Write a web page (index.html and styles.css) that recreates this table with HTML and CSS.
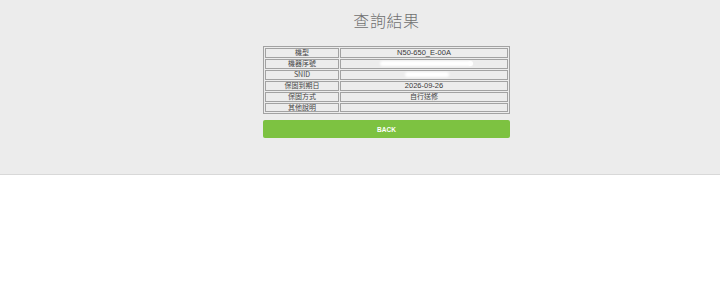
FILE: index.html
```html
<!DOCTYPE html>
<html lang="zh-Hant">
<head>
<meta charset="utf-8">
<title>查詢結果</title>
<link rel="stylesheet" href="styles.css">
</head>
<body>
<section class="panel">
  <div class="content">
    <h1 class="title">查詢結果</h1>
    <table class="result">
      <tr><td class="label">機型</td><td class="value">N50-650_E-00A</td></tr>
      <tr><td class="label">機器序號</td><td class="value"><span class="mask mask-serial"></span><span class="dot"></span></td></tr>
      <tr><td class="label">SNID</td><td class="value"><span class="mask mask-snid"></span></td></tr>
      <tr><td class="label">保固到期日</td><td class="value">2026-09-26</td></tr>
      <tr><td class="label">保固方式</td><td class="value cjk">自行送修</td></tr>
      <tr><td class="label">其他說明</td><td class="value"></td></tr>
    </table>
    <button class="back" type="button">BACK</button>
  </div>
</section>
</body>
</html>
```

FILE: styles.css
```css
html, body {
  margin: 0;
  padding: 0;
  background: #ffffff;
  font-family: "Liberation Sans", "Noto Sans CJK TC", sans-serif;
}

.panel {
  background: #ececec;
  height: 174px;
  border-bottom: 1px solid #d8d8d8;
  box-shadow: 0 1px 1px rgba(0, 0, 0, 0.04);
}

.content {
  display: flex;
  flex-direction: column;
  align-items: center;
  padding-left: 53px;
}

.title {
  margin: 11px 0 0;
  height: 35px;
  font-family: "Noto Sans CJK TC", sans-serif;
  font-size: 16px;
  font-weight: 300;
  line-height: 19px;
  color: #707070;
  letter-spacing: 0.6px;
}

.result {
  width: 247px;
  border: 1px solid #a2a2a2;
  border-spacing: 1px;
  font-size: 7.5px;
  color: #3a3a3a;
}

.result td {
  border: 1px solid #a2a2a2;
  padding: 0;
  height: 7.9px;
  line-height: 7.9px;
  text-align: center;
  white-space: nowrap;
  overflow: hidden;
}

.result .label,
.result .cjk {
  font-family: "Noto Sans CJK TC", sans-serif;
  font-size: 7px;
  color: #444444;
}

.result .label {
  width: 72px;
}

.mask {
  display: inline-block;
  height: 5px;
  background: #ffffff;
  border-radius: 3px;
  filter: blur(0.8px);
  vertical-align: middle;
}

.mask-serial {
  width: 92px;
  margin-left: 4px;
}

.dot {
  display: inline-block;
  width: 5px;
  height: 5px;
  margin-left: -4px;
  border-radius: 50%;
  background: #ffffff;
  vertical-align: middle;
}

.mask-snid {
  width: 44px;
  margin-left: 6px;
}

.back {
  margin-top: 6px;
  width: 247px;
  height: 18px;
  border: none;
  border-radius: 2px;
  background: #7dc241;
  color: #ffffff;
  font-family: "Liberation Sans", sans-serif;
  font-size: 6.5px;
  font-weight: bold;
  padding: 0;
}
```
